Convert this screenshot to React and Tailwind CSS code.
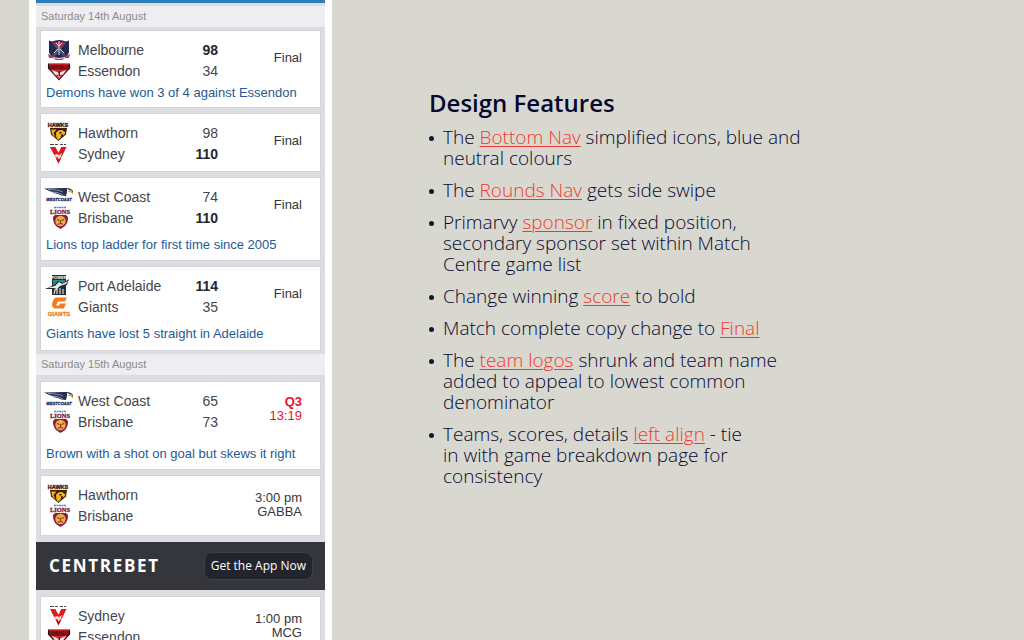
import React from 'react';

const logos = {
  melbourne: (
    <>
      <path d="M5 1.5 8 2.5Q15 -0.5 22 2.5l3-1v12q-2 5-10 7-8-2-10-7z" fill="#1d2b52" />
      <path d="M8 4 13 10 8 16l2 2 5-5 5 5 2-2-5-6 5-6-4-1-3 4-3-4z" fill="#44506f" />
      <path d="M9 3h12l-6 7z" fill="#b72b4c" />
      <path d="m12 4 3 3 3-3M15 2v14M10 14l4-4M20 14l-4-4" stroke="#e9dce3" strokeWidth="1" fill="none" />
      <path d="M4 15q3 1 5 3 6 2 12 0 2-2 5-3l-1 4h-4l-3 2h-6l-3-2H5z" fill="#c6354f" />
      <path d="M9 18.5q6 2 12 0" stroke="#f3dfe3" strokeWidth="1" fill="none" />
    </>
  ),
  essendon: (
    <>
      <path d="M4 3.5h22v5L15 20.5 4 8.5z" fill="#1b1413" />
      <path d="M5 4h20v4.500H5z" fill="#cf161e" />
      <text x="15" y="8" textAnchor="middle" fontSize="4" fontWeight="900" fill="#1b1413">ESSENDON</text>
      <path d="M6 9.500h18l-9 10z" fill="#d42a31" />
      <path d="m8 10 7 3 7-3-3 4.500-3 .5-1 3.500-1-3.500-3-.5z" fill="#f1eceb" />
      <path d="M14.500 11h1.500v5h-1.500z" fill="#33292a" />
    </>
  ),
  hawthorn: (
    <>
      <text x="14" y="4.500" textAnchor="middle" fontSize="5.500" fontWeight="900" stroke="#3b1d12" strokeWidth=".4" fill="#3b1d12">HAWKS</text>
      <path d="M6 6h17l-1 6.500-7.500 6.500-7.500-6.500z" fill="#3b1d12" />
      <path d="M7.500 7.500h5l-3 3.500 2 4.500-3.500-3.500z" fill="#f4b51c" />
      <path d="M12 11q2-3.500 6-3l3.500 2.500-1.500 3-2.500-2-1 4.500-2.500 2q-2.500-3-2-7z" fill="#f4b51c" />
      <path d="M15 10.500q2-1 3 0l-2 1.500z" fill="#3b1d12" />
    </>
  ),
  sydney: (
    <>
      <path d="M6 1.5h4m1 0h3m2 0h3m1 0h2" stroke="#4b4142" strokeWidth="1" />
      <path d="M6 4h5.500l3 5.500L17 4h5.500L14.500 20.500z" fill="#e0191f" />
      <path d="m11.500 4 3 5.500L17 4z" fill="#fff" />
      <path d="m10 12 3-1 2 1 3-2-1 3 1 1-2 .5-1.500 2.500-1-3-2 .5z" fill="#fff" opacity=".8" />
      <path d="M12.500 16h4l-2 4.500z" fill="#c3151b" />
    </>
  ),
  westCoast: (
    <>
      <path d="M0 2.5 20 2q7-.5 9 3v3l-2-2h-4l-1 4q-5 0-8-2L7 6.500l5 .5Q5 5.500 0 2.5z" fill="#25304d" />
      <path d="M4 3.500q10 0 15 2.500M9 6q5 0 10 3" stroke="#8793a8" strokeWidth="1" fill="none" />
      <path d="m23 3 5 2-5 1z" fill="#fff" />
      <path d="M25 4q4 0 4 4-1-2-4-2z" fill="#e9ae2b" />
      <text x="15" y="14.500" textAnchor="middle" fontSize="4" fontWeight="900" fontStyle="italic" stroke="#1f3260" strokeWidth=".3" fill="#1f3260">WESTCOAST</text>
    </>
  ),
  brisbane: (
    <>
      <path d="M10 .5h12" stroke="#4f86c0" strokeWidth="1.5" strokeDasharray="2 .5" />
      <text x="16" y="7" textAnchor="middle" fontFamily="Liberation Serif, serif" fontSize="6.500" fontWeight="900" stroke="#83173c" strokeWidth=".3" fill="#83173c">LIONS</text>
      <path d="m9 10 2-2h11l2 2q0 6-3 9l-4.500 3-4.500-3Q9 16 9 10z" fill="#8a1a40" />
      <circle cx="16.500" cy="14" r="5.200" fill="#eead3c" />
      <path d="m13 12.500 2.500 1M20 12.500l-2.500 1M16.500 13v3M14 17.500q2.500-2 5 0" stroke="#8a3a25" strokeWidth="1.1" fill="none" />
    </>
  ),
  portAdelaide: (
    <>
      <path d="M8 0h14v20H8z" fill="#272c30" />
      <path d="M9 5h12v6H9z" fill="#1e8f92" />
      <text x="15" y="4.200" textAnchor="middle" fontSize="4" fontWeight="900" fill="#fff">POWER</text>
      <path d="m1 14 9-4 4-4 5 2 6-4-2 6-7 2-3 3-3-1z" fill="#24292d" />
      <path d="m3 13 8-2 4-4 3 2 6-3-2 3-6 2-3 3-3-1z" fill="#e8eeee" />
      <path d="m10 19 1-4 2-1v5m3-6v6m3-5v5" stroke="#d9dedf" strokeWidth="1.2" fill="none" />
    </>
  ),
  giants: (
    <>
      <path d="M12 1.500h11l-2 4h-7l-2 4h3l1-2h6l-2 5h-9q-3-1-3-4 1-6 4-7z" fill="#f47b20" />
      <text x="15" y="19.500" textAnchor="middle" fontSize="6" fontWeight="900" stroke="#f47b20" strokeWidth=".3" fill="#f47b20">GIANTS</text>
    </>
  )
};

const saturday14 = [
  {
    teams: [
      { name: 'Melbourne', logo: 'melbourne', score: 98, winner: true },
      { name: 'Essendon', logo: 'essendon', score: 34 }
    ],
    status: 'Final',
    note: 'Demons have won 3 of 4 against Essendon',
    noteSpacing: 'pt-1'
  },
  {
    teams: [
      { name: 'Hawthorn', logo: 'hawthorn', score: 98 },
      { name: 'Sydney', logo: 'sydney', score: 110, winner: true }
    ],
    status: 'Final'
  },
  {
    teams: [
      { name: 'West Coast', logo: 'westCoast', score: 74 },
      { name: 'Brisbane', logo: 'brisbane', score: 110, winner: true }
    ],
    status: 'Final',
    note: 'Lions top ladder for first time since 2005',
    noteSpacing: 'pt-[9px] pb-px'
  },
  {
    teams: [
      { name: 'Port Adelaide', logo: 'portAdelaide', score: 114, winner: true },
      { name: 'Giants', logo: 'giants', score: 35 }
    ],
    status: 'Final',
    note: 'Giants have lost 5 straight in Adelaide',
    noteSpacing: 'pt-[9px] pb-[2px]'
  }
];

const saturday15 = [
  {
    teams: [
      { name: 'West Coast', logo: 'westCoast', score: 65 },
      { name: 'Brisbane', logo: 'brisbane', score: 73 }
    ],
    status: 'Q3',
    detail: '13:19',
    live: true,
    note: 'Brown with a shot on goal but skews it right',
    noteSpacing: 'pt-[14px] pb-px'
  },
  {
    teams: [
      { name: 'Hawthorn', logo: 'hawthorn' },
      { name: 'Brisbane', logo: 'brisbane' }
    ],
    status: '3:00 pm',
    detail: 'GABBA'
  }
];

const upNext = [
  {
    teams: [
      { name: 'Sydney', logo: 'sydney' },
      { name: 'Essendon', logo: 'essendon' }
    ],
    status: '1:00 pm',
    detail: 'MCG'
  }
];

const TeamLogo = ({ name }) => (
  <svg viewBox="0 0 30 21" className="w-[30px] h-[21px] shrink-0 overflow-visible" aria-hidden="true">
    {logos[name]}
  </svg>
);

const MatchCard = ({ match }) => {
  const upcoming = match.teams[0].score === undefined;

  return (
    <li className={`bg-white border border-[#d3d3d8] pt-2 ${upcoming ? 'pb-[9px]' : 'pb-[7px]'}`}>
      <div className="flex items-center justify-between pl-[3px] pr-[18px]">
        <ul>
          {match.teams.map((team) => (
            <li key={team.name} className="flex items-center h-[21px] text-sm text-[#45464c]">
              <TeamLogo name={team.logo} />
              <span className="ml-1 w-24">{team.name}</span>
              <span className={`w-11 text-right ${team.winner ? 'font-bold text-[#25262c]' : ''}`}>
                {team.score}
              </span>
            </li>
          ))}
        </ul>
        <p
          className={`text-right text-[13px] leading-[14px] ${
            match.live ? 'text-[#e8112d]' : 'text-[#34353b]'
          } ${upcoming ? '' : 'pb-1'}`}
        >
          <span className={match.live ? 'font-bold' : ''}>{match.status}</span>
          {match.detail && (
            <>
              <br />
              {match.detail}
            </>
          )}
        </p>
      </div>
      {match.note && (
        <p className={`pl-[5px] text-[13px] leading-[15px] text-[#1f5a94] whitespace-nowrap ${match.noteSpacing}`}>
          {match.note}
        </p>
      )}
    </li>
  );
};

const MatchList = ({ matches, className = 'py-[6px]' }) => (
  <ul className={`flex flex-col gap-[5px] px-1 ${className}`}>
    {matches.map((match) => (
      <MatchCard key={match.teams[0].name} match={match} />
    ))}
  </ul>
);

const DayHeader = ({ children }) => (
  <h3 className="bg-[#eeeef0] px-[5px] text-[11px] leading-[21px] text-[#8a8b91]">{children}</h3>
);

const Term = ({ children }) => (
  <a href="#" className="text-[#f0382f] underline decoration-1 underline-offset-2">
    {children}
  </a>
);

const Feature = ({ children }) => (
  <li className="flex items-start">
    <span className="mt-[9px] mr-[9px] size-[5px] shrink-0 rounded-full bg-[#12153a]" />
    <p>{children}</p>
  </li>
);

const App = () => {
  return (
    <div className="h-screen overflow-hidden flex items-start bg-[#d9d8d0]">
      {/* Match centre */}
      <section className="ml-[29px] w-[303px] shrink-0 bg-white px-[7px] font-['Liberation_Sans',sans-serif]">
        <div className="bg-[#dcdce1] border-t-3 border-[#2f7cba] pt-[3px]">
          <DayHeader>Saturday 14th August</DayHeader>
          <MatchList matches={saturday14} className="py-[3px]" />
          <DayHeader>Saturday 15th August</DayHeader>
          <MatchList matches={saturday15} />

          {/* Sponsor */}
          <div className="h-12 flex items-center justify-between bg-[#35363b] pl-[13px] pr-3 font-['Open_Sans',sans-serif] text-white">
            <span className="text-[17px] font-bold tracking-widest">CENTREBET</span>
            <button className="h-7 px-[6px] rounded-lg border border-[#3e4047] bg-[#22252d] text-xs font-medium">
              Get the App Now
            </button>
          </div>

          <MatchList matches={upNext} />
        </div>
      </section>

      {/* Notes */}
      <section className="ml-[97px] mt-[88px] font-['Open_Sans',sans-serif] text-[#05082e]">
        <h1 className="text-2xl leading-[30px] font-semibold">Design Features</h1>
        <ul className="mt-[9px] flex flex-col gap-[11px] text-[19px] leading-[21px] font-light">
          <Feature>
            The <Term>Bottom Nav</Term> simplified icons, blue and
            <br />
            neutral colours
          </Feature>
          <Feature>
            The <Term>Rounds Nav</Term> gets side swipe
          </Feature>
          <Feature>
            Primarvy <Term>sponsor</Term> in fixed position,
            <br />
            secondary sponsor set within Match
            <br />
            Centre game list
          </Feature>
          <Feature>
            Change winning <Term>score</Term> to bold
          </Feature>
          <Feature>
            Match complete copy change to <Term>Final</Term>
          </Feature>
          <Feature>
            The <Term>team logos</Term> shrunk and team name
            <br />
            added to appeal to lowest common
            <br />
            denominator
          </Feature>
          <Feature>
            Teams, scores, details <Term>left align</Term> - tie
            <br />
            in with game breakdown page for
            <br />
            consistency
          </Feature>
        </ul>
      </section>
    </div>
  );
};

export default App;
